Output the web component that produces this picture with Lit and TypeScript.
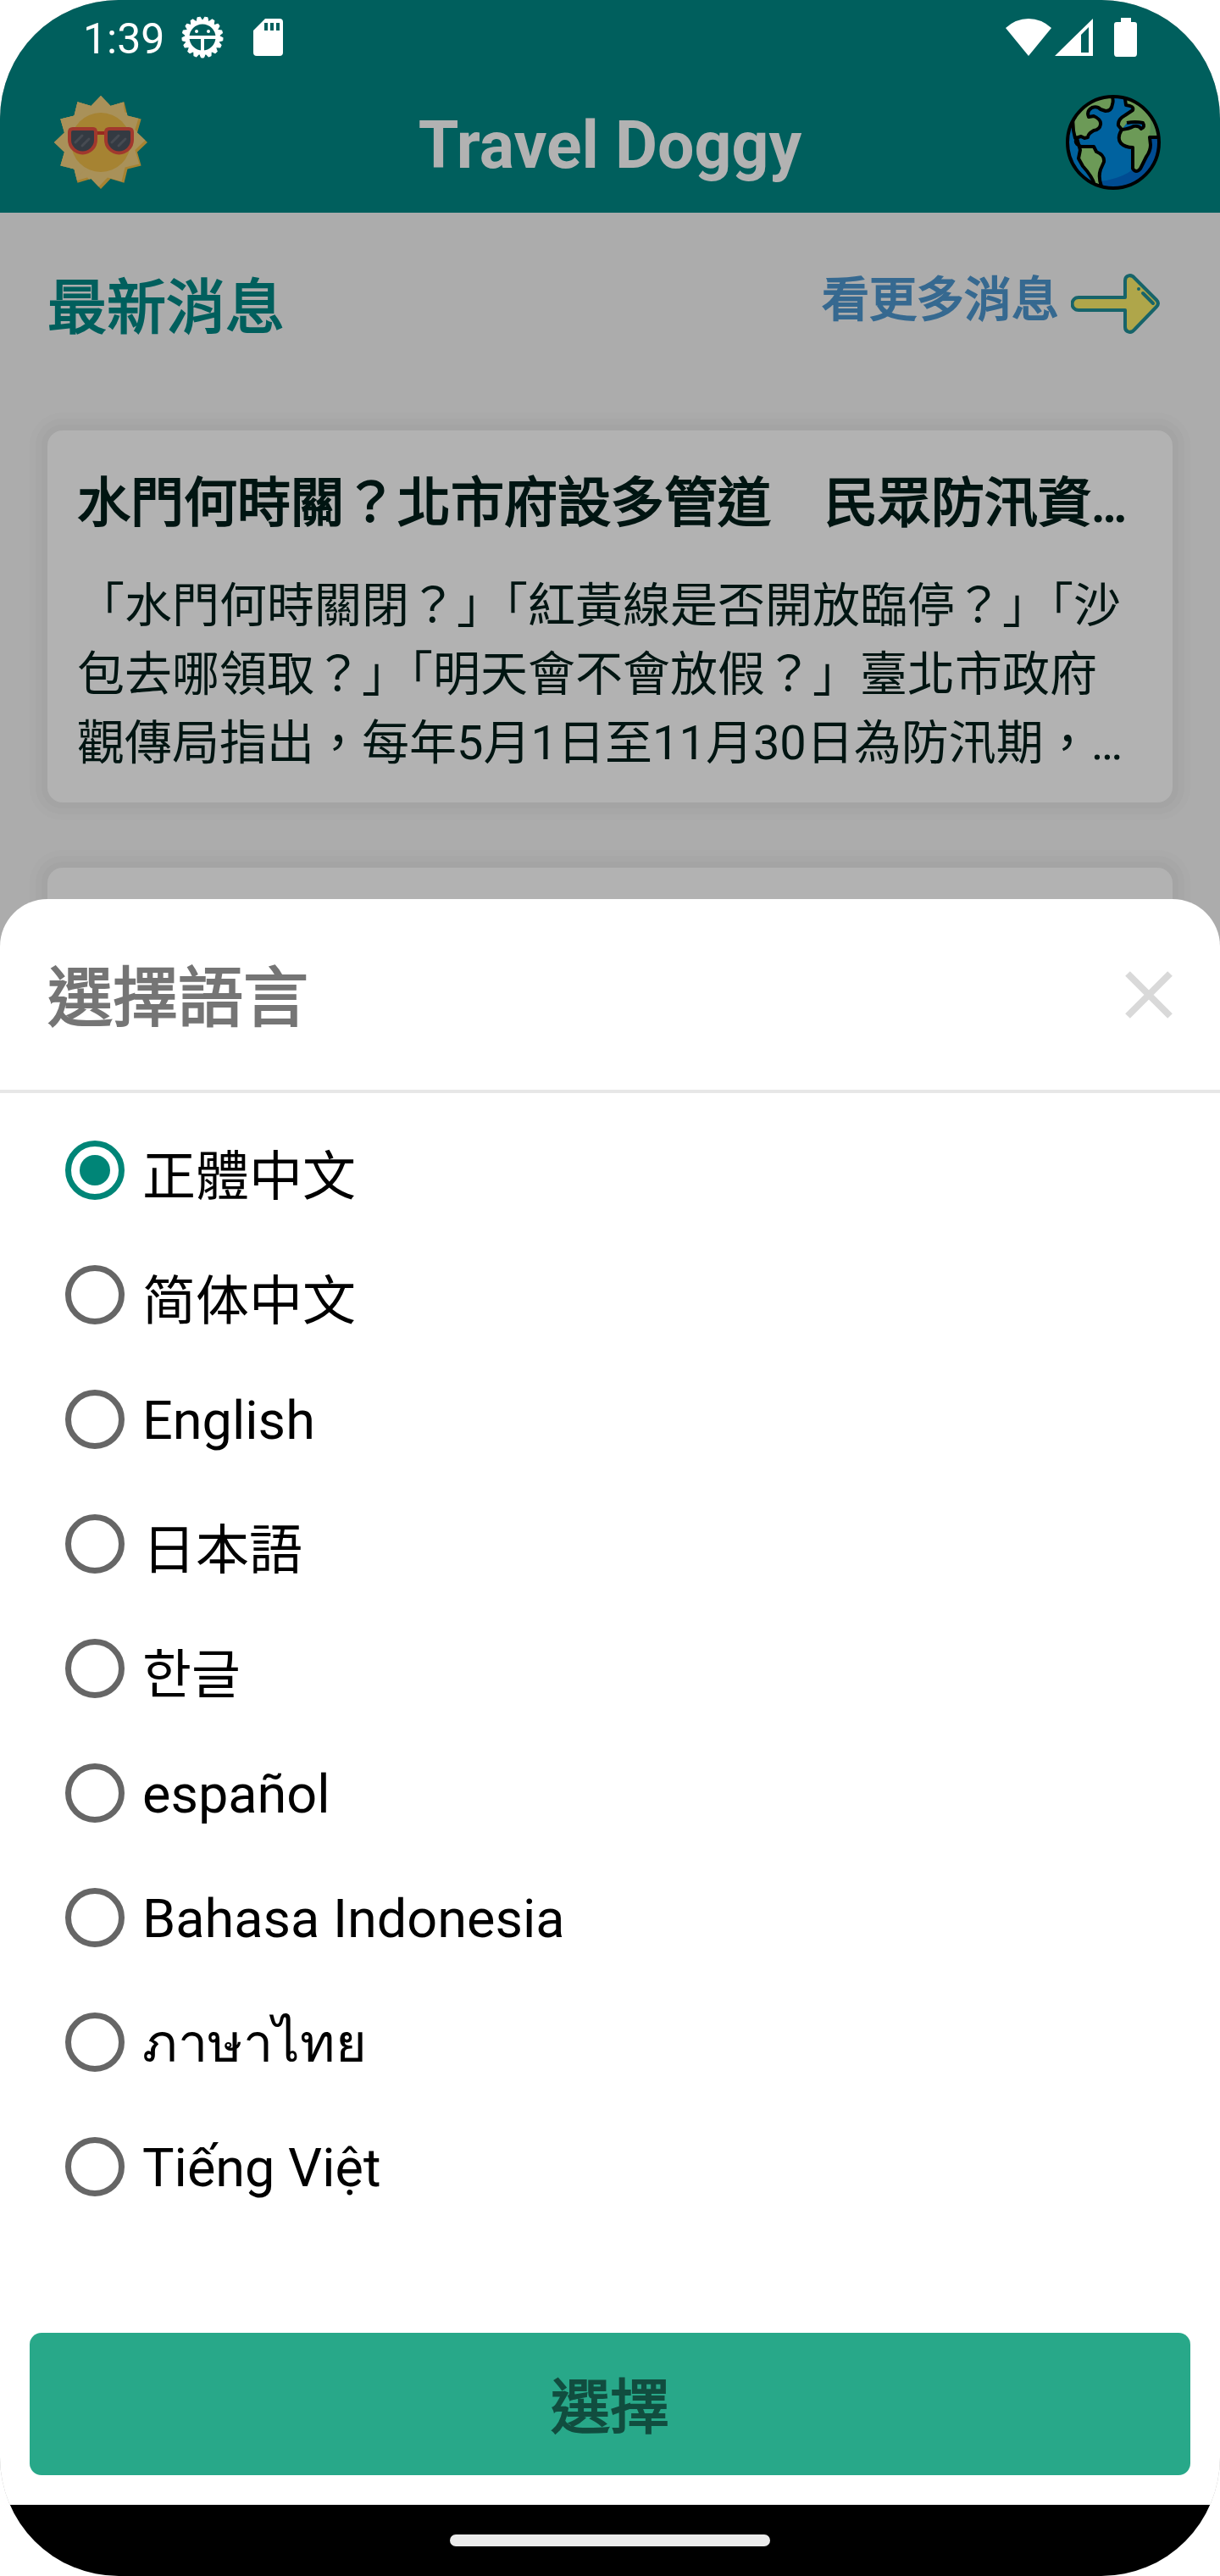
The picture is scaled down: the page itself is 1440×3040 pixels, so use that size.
import { LitElement, html, svg, css } from "lit";
import { customElement, state } from "lit/decorators.js";

interface Language {
  code: string;
  name: string;
}

const LANGUAGES: Language[] = [
  { code: "zh-Hant", name: "正體中文" },
  { code: "zh-Hans", name: "简体中文" },
  { code: "en", name: "English" },
  { code: "ja", name: "日本語" },
  { code: "ko", name: "한글" },
  { code: "es", name: "español" },
  { code: "id", name: "Bahasa Indonesia" },
  { code: "th", name: "ภาษาไทย" },
  { code: "vi", name: "Tiếng Việt" },
];

/** Points of a regular star, alternating between the outer and inner radius. */
function starPoints(cx: number, cy: number, outer: number, inner: number, spikes: number): string {
  return Array.from({ length: spikes * 2 }, (_, i) => {
    const r = i % 2 ? inner : outer;
    const a = (Math.PI * i) / spikes;
    return `${(cx + r * Math.sin(a)).toFixed(2)},${(cy - r * Math.cos(a)).toFixed(2)}`;
  }).join(" ");
}

const sunStar = starPoints(55, 55, 55, 44.5, 12);

const sunIcon = html`<svg width="110" height="110" viewBox="0 0 110 110" aria-hidden="true">
  <defs><clipPath id="sun-clip"><polygon points=${sunStar} /></clipPath></defs>
  <polygon points=${sunStar} fill="#a68332" />
  <g clip-path="url(#sun-clip)">
    <polygon points=${starPoints(51, 52, 57, 46, 12)} fill="#a99159" />
    <path d="M0 0H82V40L28 96L0 90Z" fill="#a99159" />
  </g>
  <circle cx="55" cy="55" r="35" fill="#a68332" />
  <path d="M50 44H60" stroke="#982a1f" stroke-width="4" />
  <path d="M22 39H46Q49 39 49 43V52A15 15 0 0 1 18 52V43Q18 39 22 39Z" fill="#343a42" stroke="#a1382d" stroke-width="4" />
  <path d="M65 39H88Q92 39 92 43V52A15 15 0 0 1 61 52V43Q61 39 65 39Z" fill="#343a42" stroke="#a1382d" stroke-width="4" />
  <path d="M25 55L33 47M33 59L41 51M68 55L76 47M76 59L84 51" stroke="#474b52" stroke-width="3" stroke-linecap="round" />
</svg>`;

const globeIcon = html`<svg width="112" height="112" viewBox="0 0 112 112" aria-hidden="true">
  <defs><clipPath id="globe-clip"><circle cx="56" cy="56" r="54" /></clipPath></defs>
  <g clip-path="url(#globe-clip)">
    <rect width="112" height="112" fill="#00629f" />
    <path d="M40 102Q80 98 96 68L102 50H112V112H40Z" fill="#004c92" />
    <g fill="#6c9a57" stroke="#000" stroke-width="4" stroke-linejoin="round">
      <path d="M9 22L28 4L42 -1H53Q57 5 55 11Q54 19 47 19L41 17Q37 13 31 15Q24 19 27 26L33 25Q42 29 41 35Q40 41 33 42Q26 46 26 50L22 51L18 49L11 51Q7 38 9 22Z" />
      <path d="M13 51Q9 57 18 61H33L36 67Q46 71 45 79L41 88Q38 97 42 108L34 106Q31 96 20 84L15 75L17 65Z" />
      <path d="M69 -2L71 12Q81 13 79 18L70 24Q61 29 62 36L66 41Q60 51 65 57Q70 62 79 62V87Q83 93 88 87L95 73Q100 66 100 59L99 50H114V20L92 2Z" />
      <path d="M72 33Q82 31 91 33Q94 38 89 40Q86 36 80 37Q75 40 66 41" fill="#00629f" />
    </g>
    <path d="M98 18Q110 32 109 48H99Q101 32 98 18Z" fill="#48854f" opacity=".6" />
  </g>
  <circle cx="56" cy="56" r="54" fill="none" stroke="#000" stroke-width="4" />
</svg>`;

const arrowIcon = html`<svg width="106" height="72" viewBox="0 0 106 72" aria-hidden="true">
  <path d="M9 28H64V8C64 2 71 0 75 5L101 31Q105 35 101 39L75 66C71 71 64 69 64 63V43H9A7 7 0 0 1 9 28Z"
    fill="#afa64a" stroke="#17646a" stroke-width="4" stroke-linejoin="round" />
  <path d="M80 18L80 18M85 23L97 35" stroke="#17646a" stroke-width="4" stroke-linecap="round" />
</svg>`;

const debugIcon = html`<svg width="52" height="52" viewBox="-26 -26 52 52" aria-hidden="true">
  ${Array.from({ length: 17 }, (_, i) => svg`<path d="M-4 18L-1.5 24H1.5L4 18Z" fill="#fff" stroke="#fff" stroke-width="1" stroke-linejoin="round" transform="rotate(${(360 * i) / 17})" />`)}
  <circle r="18" fill="none" stroke="#fff" stroke-width="5" />
  <path d="M-17 0H17M0 0V17" stroke="#fff" stroke-width="4" />
  <circle cx="-7" cy="-7" r="2" fill="#fff" /><circle cx="7" cy="-7" r="2" fill="#fff" />
</svg>`;

const sdCardIcon = html`<svg width="36" height="46" viewBox="0 0 36 46" aria-hidden="true">
  <path fill="#fff" fill-rule="evenodd" d="M14 1H31Q35 1 35 5V41Q35 45 31 45H4Q0 45 0 41V15ZM13 6V15H17V6ZM20 6V15H24V6ZM27 6V15H31V6Z" />
</svg>`;

const wifiIcon = html`<svg width="54" height="46" viewBox="0 0 54 46" aria-hidden="true">
  <path fill="#fff" d="M0 12Q12 1 27 1T54 12L27 45Z" />
</svg>`;

const signalIcon = html`<svg width="46" height="46" viewBox="0 0 46 46" aria-hidden="true">
  <path fill="#fff" fill-rule="evenodd" d="M0 45L45 1V45ZM31 20V41H40V11Z" />
</svg>`;

const batteryIcon = html`<svg width="28" height="46" viewBox="0 0 28 46" aria-hidden="true">
  <path fill="#fff" d="M8 0H20V5H24Q27 5 27 8V42Q27 46 24 46H3Q0 46 0 42V8Q0 5 3 5H8Z" />
</svg>`;

const closeIcon = html`<svg width="56" height="56" viewBox="0 0 56 56" aria-hidden="true">
  <path d="M3 3L53 53M53 3L3 53" stroke="#d9d9d9" stroke-width="8" />
</svg>`;

@customElement("app-root")
export class AppRoot extends LitElement {
  @state() private selected = "zh-Hant";

  static styles = css`
    :host {
      display: block;
      background: #fff;
      font-family: Roboto, "Noto Sans CJK TC", "Noto Sans", sans-serif;
    }
    *, *::before, *::after { box-sizing: border-box; }
    h1, h2, h3, p { margin: 0; }
    svg { display: block; flex: none; }
    button { border: 0; padding: 0; margin: 0; background: none; font: inherit; cursor: pointer; }

    .device {
      display: flex;
      flex-direction: column;
      min-height: 100vh;
      border-radius: 140px;
      overflow: hidden;
      background: #fff;
    }
    .screen { flex: 1; display: grid; }
    .page, .sheet { grid-area: 1 / 1; min-width: 0; }
    .page { display: flex; flex-direction: column; background: #acacac; }

    .top { background: #005f5d; }
    .status {
      display: flex;
      align-items: center;
      justify-content: space-between;
      height: 84px;
      padding: 4px 97px 0 98px;
      color: #fff;
      font-size: 50px;
      line-height: 56px;
    }
    .status-left, .status-right { display: flex; align-items: center; }
    .status-left { gap: 19px; }
    .status-left span { padding-top: 4px; }
    .status-left svg:last-child { margin-left: 15px; }
    .status-right { gap: 4px; }
    .status-right svg:last-child { margin-left: 20px; }
    .bar {
      display: grid;
      grid-template-columns: 112px 1fr 112px;
      align-items: center;
      height: 167px;
      padding: 0 70px 0 64px;
    }
    .bar h1 {
      padding: 8px 0 0 6px;
      color: #b2b2b2;
      font-size: 77px;
      line-height: 90px;
      font-weight: 700;
      text-align: center;
    }

    /* Emboldened regular weight, as used for Chinese headings. */
    .news-head h2, .more, .card h3, .sheet-head h2, .confirm {
      font-weight: 400;
      -webkit-text-stroke: 2px currentColor;
    }

    .news { flex: 1; display: flex; flex-direction: column; padding: 0 56px; }
    .news-head {
      display: flex;
      justify-content: space-between;
      align-items: center;
      height: 216px;
    }
    .news-head h2 { padding-top: 10px; color: #005f5d; font-size: 70px; line-height: 84px; }
    .more {
      display: flex;
      align-items: center;
      gap: 14px;
      padding-right: 14px;
      color: #366990;
      font-size: 56px;
      line-height: 70px;
      text-decoration: none;
    }
    .more span { padding-bottom: 10px; }
    .cards { flex: 1; display: flex; flex-direction: column; gap: 77px; padding-top: 41px; }
    .card {
      padding: 44px 35px 29px;
      border-radius: 18px;
      background: #b2b2b2;
      color: #001512;
      box-shadow: 0 0 0 7px #a4a4a4, 0 0 0 14px #a7a7a7, 0 0 0 21px #aaaaaa;
    }
    .card.next { flex: 1; }
    .card h3 {
      font-size: 63px;
      line-height: 84px;
      white-space: nowrap;
      overflow: hidden;
      text-overflow: ellipsis;
    }
    .card p {
      margin-top: 39px;
      font-size: 56px;
      line-height: 81px;
      display: -webkit-box;
      -webkit-box-orient: vertical;
      -webkit-line-clamp: 3;
      overflow: hidden;
    }

    .sheet {
      align-self: end;
      display: flex;
      flex-direction: column;
      border-radius: 56px 56px 0 0;
      background: #fff;
    }
    .sheet-head {
      display: flex;
      align-items: center;
      justify-content: space-between;
      height: 229px;
      padding: 0 56px;
      border-bottom: 4px solid #e7e7e7;
    }
    .sheet-head h2 { padding-top: 10px; color: #757575; font-size: 77px; line-height: 112px; }
    .options { margin: 0; border: 0; padding: 17px 77px 0; min-width: 0; }
    .option {
      display: flex;
      align-items: center;
      gap: 21px;
      height: 147px;
      color: #000;
      font-size: 63px;
      cursor: pointer;
    }
    .option input {
      appearance: none;
      flex: none;
      display: grid;
      place-items: center;
      width: 70px;
      height: 70px;
      margin: 0;
      border: 7px solid #666;
      border-radius: 50%;
    }
    .option input:checked { border-color: #008577; }
    .option input:checked::before {
      content: "";
      width: 36px;
      height: 36px;
      border-radius: 50%;
      background: #008577;
    }
    .option span { padding-top: 3px; }
    .option:lang(zh-Hans) { font-family: Roboto, "Noto Sans CJK SC", sans-serif; }
    .option:lang(ja) { font-family: Roboto, "Noto Sans CJK JP", sans-serif; }
    .option:lang(ko) { font-family: Roboto, "Noto Sans CJK KR", sans-serif; }
    .confirm {
      margin: 123px 35px 35px;
      padding-top: 10px;
      height: 168px;
      border-radius: 14px;
      background: #28a889;
      color: #114d3f;
      font-size: 70px;
      line-height: 84px;
    }

    .nav {
      display: flex;
      align-items: center;
      justify-content: center;
      height: 84px;
      background: #000;
    }
    .pill { width: 378px; height: 14px; border-radius: 7px; background: #ebebeb; }
  `;

  render() {
    return html`
      <div class="device" lang="zh-Hant">
        <div class="screen">
          <div class="page">
            <header class="top">
              <div class="status">
                <div class="status-left"><span>1:39</span>${debugIcon}${sdCardIcon}</div>
                <div class="status-right">${wifiIcon}${signalIcon}${batteryIcon}</div>
              </div>
              <div class="bar">
                <button type="button">${sunIcon}</button>
                <h1>Travel Doggy</h1>
                <button type="button">${globeIcon}</button>
              </div>
            </header>
            <main class="news">
              <div class="news-head">
                <h2>最新消息</h2>
                <a class="more" href="#news"><span>看更多消息</span>${arrowIcon}</a>
              </div>
              <div class="cards">
                <article class="card">
                  <h3>水門何時關？北市府設多管道　民眾防汛資…</h3>
                  <p>「水門何時關閉？」「紅黃線是否開放臨停？」「沙包去哪領取？」「明天會不會放假？」臺北市政府觀傳局指出，每年5月1日至11月30日為防汛期，…</p>
                </article>
                <article class="card next"></article>
              </div>
            </main>
          </div>
          <section class="sheet" role="dialog" aria-labelledby="sheet-title">
            <div class="sheet-head">
              <h2 id="sheet-title">選擇語言</h2>
              <button type="button">${closeIcon}</button>
            </div>
            <fieldset class="options" aria-labelledby="sheet-title">
              ${LANGUAGES.map(
                (l) => html`<label class="option" lang=${l.code}>
                  <input
                    type="radio"
                    name="language"
                    .value=${l.code}
                    ?checked=${l.code === this.selected}
                    @change=${() => (this.selected = l.code)}
                  />
                  <span>${l.name}</span>
                </label>`
              )}
            </fieldset>
            <button class="confirm" type="button">選擇</button>
          </section>
        </div>
        <div class="nav"><div class="pill"></div></div>
      </div>
    `;
  }
}
